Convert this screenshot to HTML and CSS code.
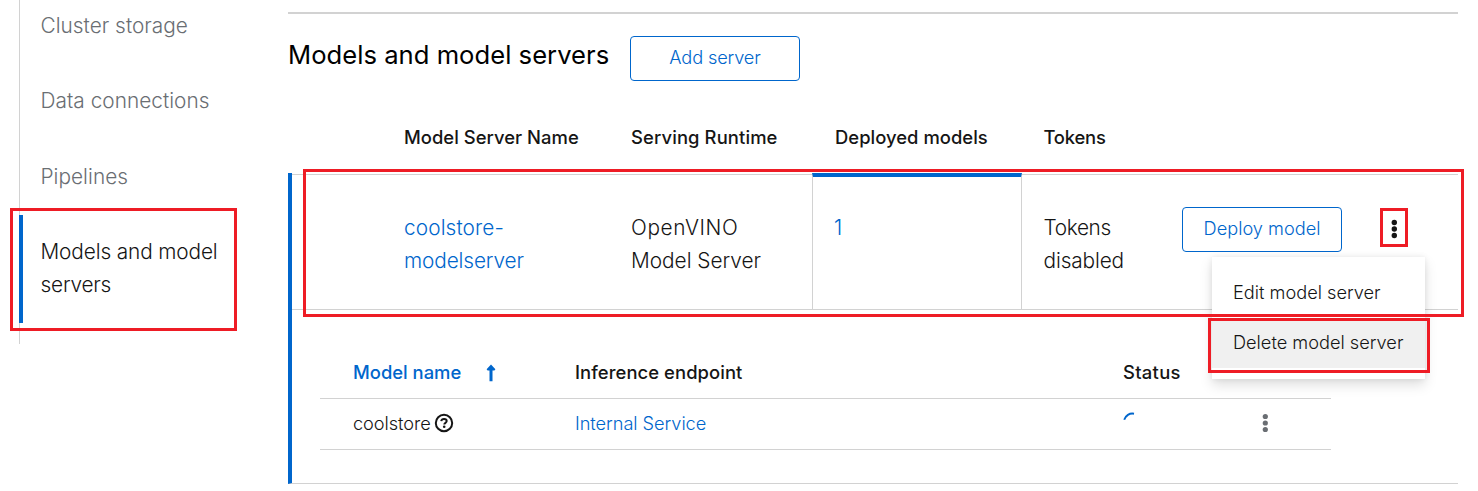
FILE: index.html
```
<!DOCTYPE html>
<html lang="en">
<head>
<meta charset="utf-8">
<title>Models and model servers</title>
<link rel="stylesheet" href="styles.css">
</head>
<body>
<div class="page">
  <nav class="sidebar">
    <a class="nav-item">Cluster storage</a>
    <a class="nav-item">Data connections</a>
    <a class="nav-item">Pipelines</a>
    <a class="nav-item current"><span class="ls-flat">Models and model</span><br><span class="ls-tight">servers</span></a>
  </nav>
  <main class="content">
    <header class="section-head">
      <h2 class="title">Models and model servers</h2>
      <button class="btn btn-add">Add server</button>
    </header>
    <div class="row table-head">
      <div class="cell name">Model Server Name</div>
      <div class="cell ls-wide">Serving Runtime</div>
      <div class="cell deployed">Deployed models</div>
      <div class="cell tokens ls-tight">Tokens</div>
    </div>
    <section class="expanded">
      <div class="row server-row">
        <div class="cell name link"><span class="ls-wide">coolstore-</span><br><span class="ls-flat">modelserver</span></div>
        <div class="cell"><span class="ls-vino">OpenVINO</span><br><span class="ls-none">Model Server</span></div>
        <div class="cell deployed link">1</div>
        <div class="cell tokens"><span class="ls-token">Tokens</span><br><span class="ls-flat">disabled</span></div>
        <div class="actions">
          <button class="btn btn-deploy">Deploy model</button>
          <svg class="kebab" width="8" height="20" viewBox="0 0 8 20"><circle cx="4.300" cy="3.500" r="2.700"/><circle cx="4.300" cy="10" r="2.700"/><circle cx="4.300" cy="16.500" r="2.700"/></svg>
        </div>
      </div>
      <div class="models">
        <div class="model-row model-head">
          <div class="sorted">Model name
            <svg class="arrow" width="10" height="18" viewBox="0 0 10 18"><path d="M5 .4 9.400 5.200 8.400 6.600H6.500V17.200H3.500V6.600H1.600L.6 5.200Z"/></svg>
          </div>
          <div class="endpoint">Inference endpoint</div>
          <div class="ls-status">Status</div>
          <div></div>
        </div>
        <div class="model-row">
          <div class="model-name">coolstore
            <svg class="help" width="20" height="20" viewBox="0 0 20 20"><circle cx="10" cy="10" r="8.2"/><path d="M7.2 8.100C7.500 6.600 8.600 6 10 6c1.500 0 2.700.8 2.700 2.100 0 1.700-2.400 1.700-2.400 3.300"/><circle class="dot" cx="10.200" cy="13.800" r="1.300"/></svg>
          </div>
          <div class="link service">Internal Service</div>
          <div><svg class="spinner" width="20" height="20" viewBox="0 0 20 20"><path d="M1.200 7.800A8.500 8.500 0 0 1 11 1.700"/></svg></div>
          <div><svg class="kebab muted" width="8" height="20" viewBox="0 0 8 20"><circle cx="4.300" cy="3.500" r="2.600"/><circle cx="4.300" cy="10" r="2.600"/><circle cx="4.300" cy="16.500" r="2.600"/></svg></div>
        </div>
      </div>
    </section>
  </main>
</div>
<div class="menu">
  <div class="menu-item">Edit model server</div>
  <div class="menu-item hovered">Delete model server</div>
</div>
<div class="mark mark-nav"></div>
<div class="mark mark-server"></div>
<div class="mark mark-kebab"></div>
<div class="mark mark-delete"></div>
</body>
</html>
```

FILE: styles.css
```
* { box-sizing: border-box; }
body {
  margin: 0;
  height: 491px;
  overflow: hidden;
  position: relative;
  background: #fff;
  color: #151515;
  font: 300 18.2px/29px Inter, "Liberation Sans", sans-serif;
  letter-spacing: 0;
}
.page { display: flex; height: 491px; }

.sidebar {
  width: 269px;
  height: 344px;
  flex: none;
  margin-left: 19px;
  border-left: 1px solid #d2d2d2;
  display: flex;
  flex-direction: column;
  justify-content: flex-end;
  padding-bottom: 21px;
}
.nav-item {
  display: block;
  flex: none;
  height: 75.4px;
  margin-left: -1px;
  padding: 20px 21px 22px 21.500px;
  font-size: 20.8px;
  line-height: 33px;
  letter-spacing: .03px;
  color: #6a6e73;
}
.nav-item.current {
  height: 108px;
  padding-left: 17.500px;
  border-left: 4px solid #06c;
  color: #151515;
}

.content { width: 1170px; padding-top: 12px; }
.section-head {
  border-top: 2px solid #d2d2d2;
  height: 89px;
  display: flex;
  align-items: flex-start;
  gap: 21px;
  padding-top: 23px;
}
.title {
  margin: 0;
  width: 321px;
  font-size: 25.6px;
  font-weight: 400;
  line-height: 36px;
  letter-spacing: .03px;
  white-space: nowrap;
  color: #000;
}
.btn {
  height: 45px;
  border: 1px solid #06c;
  border-radius: 4px;
  background: #fff;
  color: #06c;
  font: inherit;
  padding: 0 0 2px;
}
.btn-add { width: 170px; margin-top: -1px; letter-spacing: -.15px; }
.btn-deploy { width: 160px; }

.row { display: grid; grid-template-columns: 343px 181px 210px 160px 1fr; }
.cell.name { padding-left: 116px; }
.cell.deployed { padding-left: 23px; }
.cell.tokens { padding-left: 21.500px; }
.table-head {
  height: 72px;
  padding-top: 20px;
  font-size: 18.4px;
  font-weight: 500;
  line-height: 32px;
  letter-spacing: .03px;
}

.expanded {
  height: 311px;
  border-left: 4px solid #06c;
  border-bottom: 1px solid #d2d2d2;
  padding-top: 1px;
}
.server-row {
  height: 136px;
  grid-template-columns: 339px 181px 210px 160px 1fr;
  border-top: 1px solid #d2d2d2;
  border-bottom: 1px solid #d2d2d2;
  font-size: 20.8px;
  line-height: 33px;
}
.server-row .cell { padding-top: 36px; }
.server-row .cell.name { padding-left: 112px; }
.server-row .cell.deployed {
  margin-top: -2px;
  border: solid #d2d2d2;
  border-width: 0 1px;
  border-top: 4px solid #06c;
  padding: 34px 0 0 21px;
}
.link { color: #06c; }
.actions {
  display: flex;
  align-items: flex-start;
  gap: 48px;
  padding-top: 32px;
  font-size: 18.2px;
  line-height: 29px;
}
.kebab { fill: #151515; display: block; }
.actions .kebab { margin-top: 11.500px; }
.kebab.muted { fill: #6a6e73; margin: 13.500px 0 0 13px; }

.models { width: 1011px; margin: 35px 0 0 28px; }
.model-row {
  display: grid;
  grid-template-columns: 222px 548px 125px 1fr;
  padding-left: 33px;
  height: 51px;
  border-bottom: 1px solid #d2d2d2;
  line-height: 48px;
}
.model-head {
  height: 54px;
  font-size: 18.4px;
  font-weight: 500;
  line-height: 55px;
}
.sorted { color: #06c; display: flex; align-items: center; gap: 25px; }
.endpoint { letter-spacing: .08px; }
.arrow { fill: #06c; }
.model-name { display: flex; align-items: center; gap: 3.500px; padding-bottom: 2px; letter-spacing: -.05px; }
.service { letter-spacing: -.05px; }
.help { fill: none; stroke: #151515; stroke-width: 2; margin-top: -1px; }
.help .dot { fill: #151515; stroke: none; }
.spinner { display: block; margin-top: 12.500px; fill: none; stroke: #06c; stroke-width: 1.9; }

.ls-flat { letter-spacing: -.12px; }
.ls-none { letter-spacing: 0; }
.ls-wide { letter-spacing: .12px; }
.ls-tight { letter-spacing: -.2px; }
.ls-token { letter-spacing: -.35px; }
.ls-vino { letter-spacing: .6px; }
.ls-status { letter-spacing: .3px; }

.menu {
  position: absolute;
  left: 1212px;
  top: 257px;
  width: 213px;
  height: 122px;
  padding-top: 11px;
  background: #fff;
  box-shadow: 0 6px 12px rgba(3, 3, 3, .13), 0 0 6px rgba(3, 3, 3, .08);
}
.menu-item { height: 50px; line-height: 49px; padding-left: 21px; }
.menu-item.hovered { background: #f0f0f0; }

/* Red callout frames over the page */
.mark { position: absolute; border: 3px solid #ee1c25; }
.mark-nav { left: 10px; top: 208px; width: 227px; height: 123px; }
.mark-server { left: 303px; top: 169px; width: 1161px; height: 148px; }
.mark-kebab { left: 1380px; top: 208px; width: 28px; height: 39px; }
.mark-delete { left: 1208px; top: 318px; width: 222px; height: 55px; }
```
